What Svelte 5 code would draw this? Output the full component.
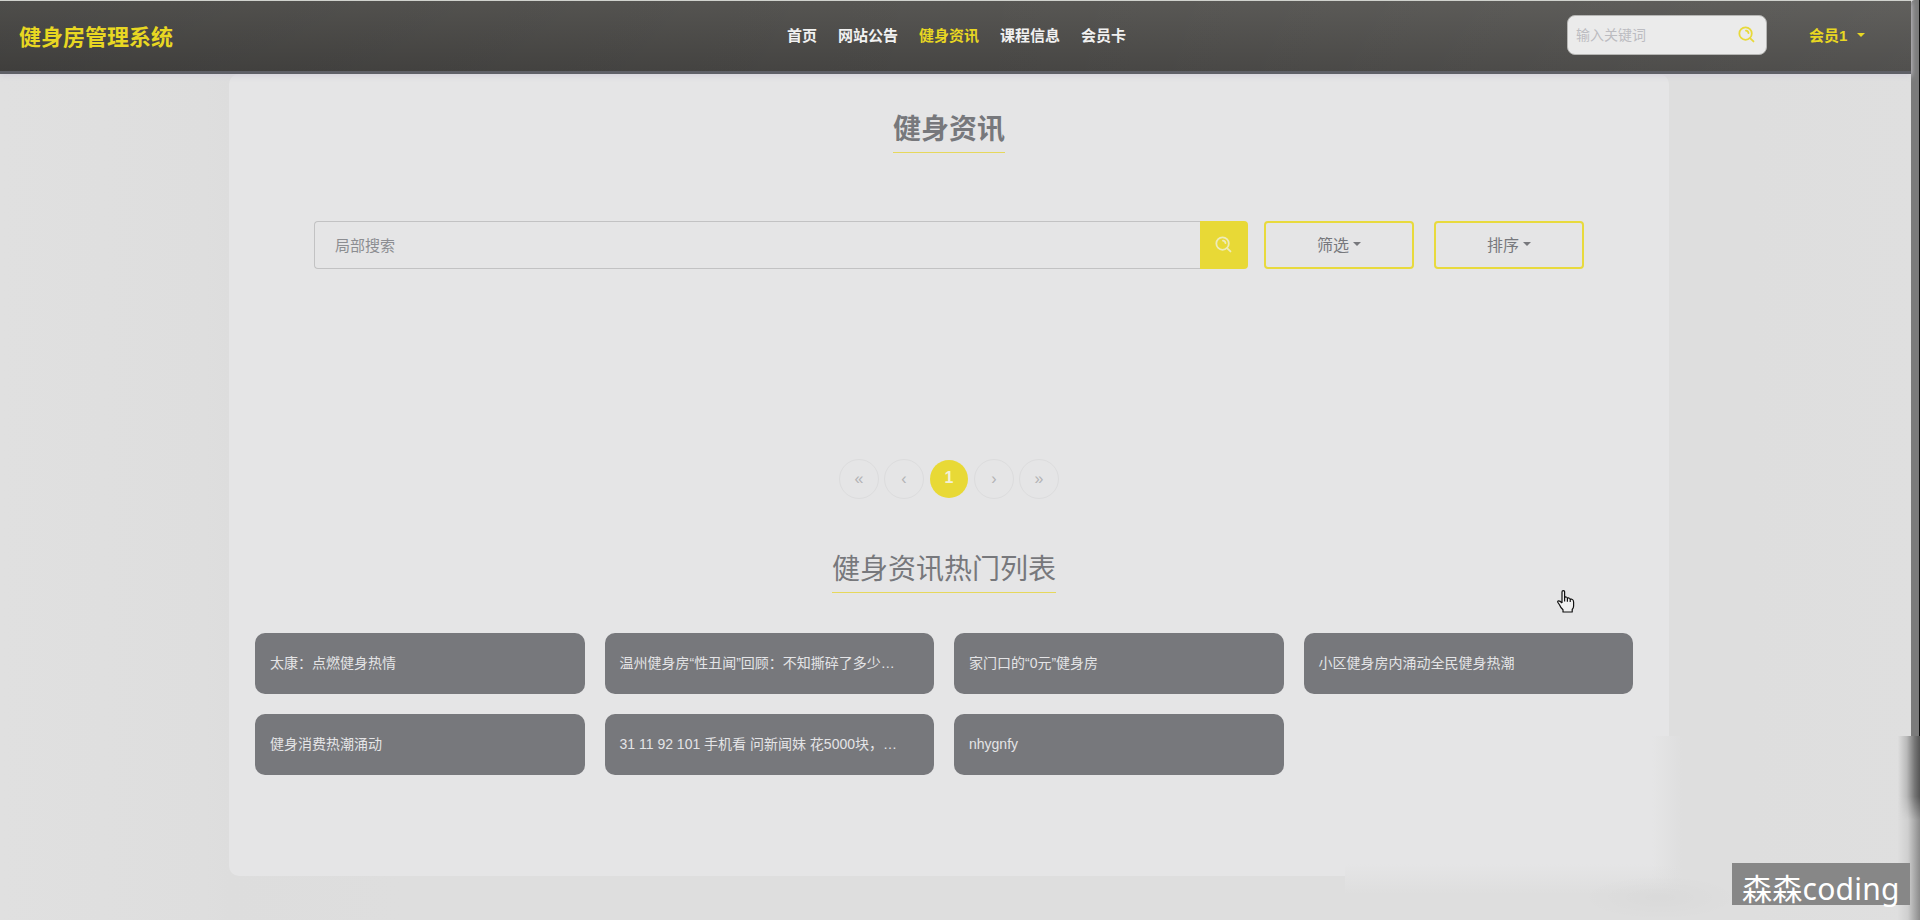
<script>
  const nav = ['首页', '网站公告', '健身资讯', '课程信息', '会员卡'];
  const current = '健身资讯';
  const pages = ['«', '‹', '1', '›', '»'];
  const hot = [
    '太康：点燃健身热情',
    '温州健身房“性丑闻”回顾：不知撕碎了多少…',
    '家门口的“0元”健身房',
    '小区健身房内涌动全民健身热潮',
    '健身消费热潮涌动',
    '31 11 92 101 手机看 问新闻妹 花5000块，…',
    'nhygnfy'
  ];
</script>

{#snippet magnifier()}
  <svg viewBox="0 0 18 18" fill="none" stroke="currentColor" stroke-width="1.9" stroke-linecap="round">
    <circle cx="8" cy="8" r="6.6" />
    <path d="M13 13 L16.4 16.4 M8.4 4.9 A3 3 0 0 1 11.1 7.6" />
  </svg>
{/snippet}

<div class="page">
  <header>
    <div class="brand">健身房管理系统</div>
    <nav>
      {#each nav as item}
        <span class:active={item === current}>{item}</span>
      {/each}
    </nav>
    <div class="keyword"><span>输入关键词</span>{@render magnifier()}</div>
    <div class="user">会员1<i class="caret"></i></div>
  </header>

  <main>
    <h1>健身资讯</h1>
    <div class="tools">
      <div class="search"><span>局部搜索</span></div>
      <div class="go">{@render magnifier()}</div>
      <div class="drop filter">筛选<i class="caret"></i></div>
      <div class="drop sort">排序<i class="caret"></i></div>
    </div>
    <div class="pager">
      {#each pages as p}
        <span class:on={p === '1'}>{p}</span>
      {/each}
    </div>
    <h2>健身资讯热门列表</h2>
    <div class="grid">
      {#each hot as title}
        <div class="card">{title}</div>
      {/each}
    </div>
  </main>

  <div class="scroll"></div>
  <div class="fade-side"></div>
  <div class="fade-bottom"></div>
  <div class="smudge"></div>
  <div class="edge"></div>
  <div class="mark">森森coding</div>
  <svg class="hand" viewBox="0 0 18 23" fill="#f0f0f0" stroke="#111" stroke-width="1.2" stroke-linejoin="round">
    <path d="M5 13 V2 Q5 .7 6.3 .7 T7.6 2 V8 Q8 6.8 9.2 7 Q10.4 7.2 10.4 8.6 Q11 7.6 12 8 Q13.2 8.3 13.2 9.7 Q14 8.9 15 9.3 Q16.6 9.8 16.6 12 V16 Q16.6 18 15.2 19.5 V22 H6 V19.8 Q3.5 17.5 2.6 15 L.8 12.2 Q.4 11 1.6 10.8 Q3 10.7 5 13 M7.6 8 V11.5 M10.4 8.6 V11.8 M13.2 9.7 V12" />
  </svg>
</div>

<style>
  :global(body) { margin: 0; overflow: hidden; }
  .page {
    position: relative; width: 1920px; height: 920px; overflow: hidden;
    background: linear-gradient(90deg, #e0e0e0, #dedede 205px, #dddddd 229px, #dedede 400px, #dedede 1750px, #dfdfdf);
    font-family: "Liberation Sans", "Noto Sans CJK SC", sans-serif;
    color: #77787c;
  }
  header {
    position: relative; z-index: 1; box-sizing: border-box; width: 1911px; height: 74px;
    display: flex; align-items: center; padding: 0 0 2px 19px;
    border-top: 1px solid #d0d2cd; border-bottom: 3px solid #5f6067;
    background: linear-gradient(90deg, rgba(0, 0, 0, .1), transparent 50%, rgba(255, 255, 255, .06)), linear-gradient(180deg, #575653, #464543);
    box-shadow: 0 2px 6px #d5d2da;
    font-weight: 700; color: #f1f1f1; font-size: 15px;
  }
  .brand { width: 768px; font-size: 22px; color: #e8d722; white-space: nowrap; }
  nav { display: flex; gap: 21px; width: 780px; padding-bottom: 2px; }
  nav span { white-space: nowrap; }
  .active, .user { color: #e8d722; }
  .keyword {
    box-sizing: border-box; width: 200px; height: 40px; flex: none;
    display: flex; align-items: center; justify-content: space-between; padding: 0 11px 2px 8px;
    background: #ebebeb; border: 1px solid #b6b6b4; border-radius: 8px;
    font-size: 14px; font-weight: 400; color: #bcbcc1;
  }
  .keyword svg { width: 17px; height: 17px; color: #e8d93a; }
  .user { display: flex; align-items: center; margin-left: 42px; padding-bottom: 2px; white-space: nowrap; }
  .caret { display: inline-block; border: 4px solid transparent; border-top-color: currentColor; border-bottom: 0; }
  .user .caret { margin: 2px 0 0 10px; }
  main {
    box-sizing: border-box; width: 1440px; height: 802px; margin-left: 229px; padding-top: 34px;
    display: flex; flex-direction: column; align-items: center;
    background: #e5e5e6; border-radius: 10px;
  }
  h1, h2 { margin: 0; box-sizing: border-box; height: 45px; line-height: 43px; font-size: 28px; border-bottom: 1px solid #e6d85c; }
  h2 { font-weight: 400; margin: 49px 10px 0 0; }
  .tools { display: flex; margin-top: 68px; height: 48px; }
  .search {
    box-sizing: border-box; width: 886px; display: flex; align-items: center; padding: 0 0 2px 20px;
    border: 1px solid #c2c2c3; border-right: 0; border-radius: 4px 0 0 4px; font-size: 15px; color: #8c8d91;
  }
  .go { box-sizing: border-box; width: 48px; display: grid; place-items: center; padding: 0 2px 1px 0; background: #e8d936; color: #eeebb9; border-radius: 0 4px 4px 0; }
  .go svg { width: 17px; height: 17px; }
  .drop {
    box-sizing: border-box; width: 150px; display: flex; align-items: center; justify-content: center;
    border: 2px solid #e8da3d; border-radius: 4px; font-size: 16px; padding-bottom: 3px;
  }
  .drop .caret { margin-left: 4px; }
  .filter { margin-left: 16px; }
  .sort { margin-left: 20px; }
  .pager { display: flex; gap: 5px; margin-top: 190px; }
  .pager span {
    box-sizing: border-box; width: 40px; height: 40px; border: 1px solid #dcdcdd; border-radius: 50%;
    display: grid; place-items: center; font-size: 16px; color: #b3b3b5;
  }
  .pager .on { border: 0; background: #e8d936; background-clip: content-box; padding: 1px; color: #f3f1d8; font-weight: 700; line-height: 36px; align-items: start; }
  .grid { display: grid; grid-template-columns: repeat(4, 1fr); gap: 20px; width: 1378px; margin: 40px 10px 0 0; }
  .card {
    height: 61px; line-height: 60px; box-sizing: border-box; padding-left: 15px; border-radius: 10px;
    background: #77787c; color: #e4e4e6; font-size: 14px; white-space: nowrap; overflow: hidden;
  }
  .scroll { position: absolute; left: 1911px; top: 0; width: 8px; height: 736px; background: #7b7b7b; border-right: 1px solid #111; border-radius: 4px 0 0 0; }
  .fade-side {
    position: absolute; left: 1652px; top: 736px; width: 40px; height: 158px;
    background: linear-gradient(rgba(222, 222, 222, 0) 128px, #dedede), linear-gradient(90deg, #e5e5e6, #dedede 75%);
  }
  .fade-bottom {
    position: absolute; left: 1345px; top: 864px; width: 307px; height: 30px;
    background: linear-gradient(#e5e5e6, #dedede);
  }
  .smudge {
    position: absolute; left: 1580px; top: 875px; width: 160px; height: 45px;
    background: radial-gradient(closest-side, rgba(0, 0, 0, .02), transparent);
  }
  .edge {
    position: absolute; left: 1898px; top: 736px; width: 22px; height: 184px;
    background: linear-gradient(90deg, #dedede, #cfcfcf 45%, #8b8b8b);
  }
  .edge::before {
    content: ""; position: absolute; inset: 0 0 100px 0;
    background: linear-gradient(90deg, #dedede, #b9b9b9 40%, #777 75%, #555);
    mask-image: linear-gradient(#000 72%, transparent);
  }
  .mark {
    position: absolute; left: 1732px; top: 863px; width: 168px; height: 42px; padding-left: 10px;
    background: #878787; color: #fff; font: 30px/51px "Noto Sans", "Noto Sans CJK SC", sans-serif; letter-spacing: .25px; white-space: nowrap;
  }
  .hand { position: absolute; left: 1557px; top: 590px; width: 18px; height: 23px; }
</style>
